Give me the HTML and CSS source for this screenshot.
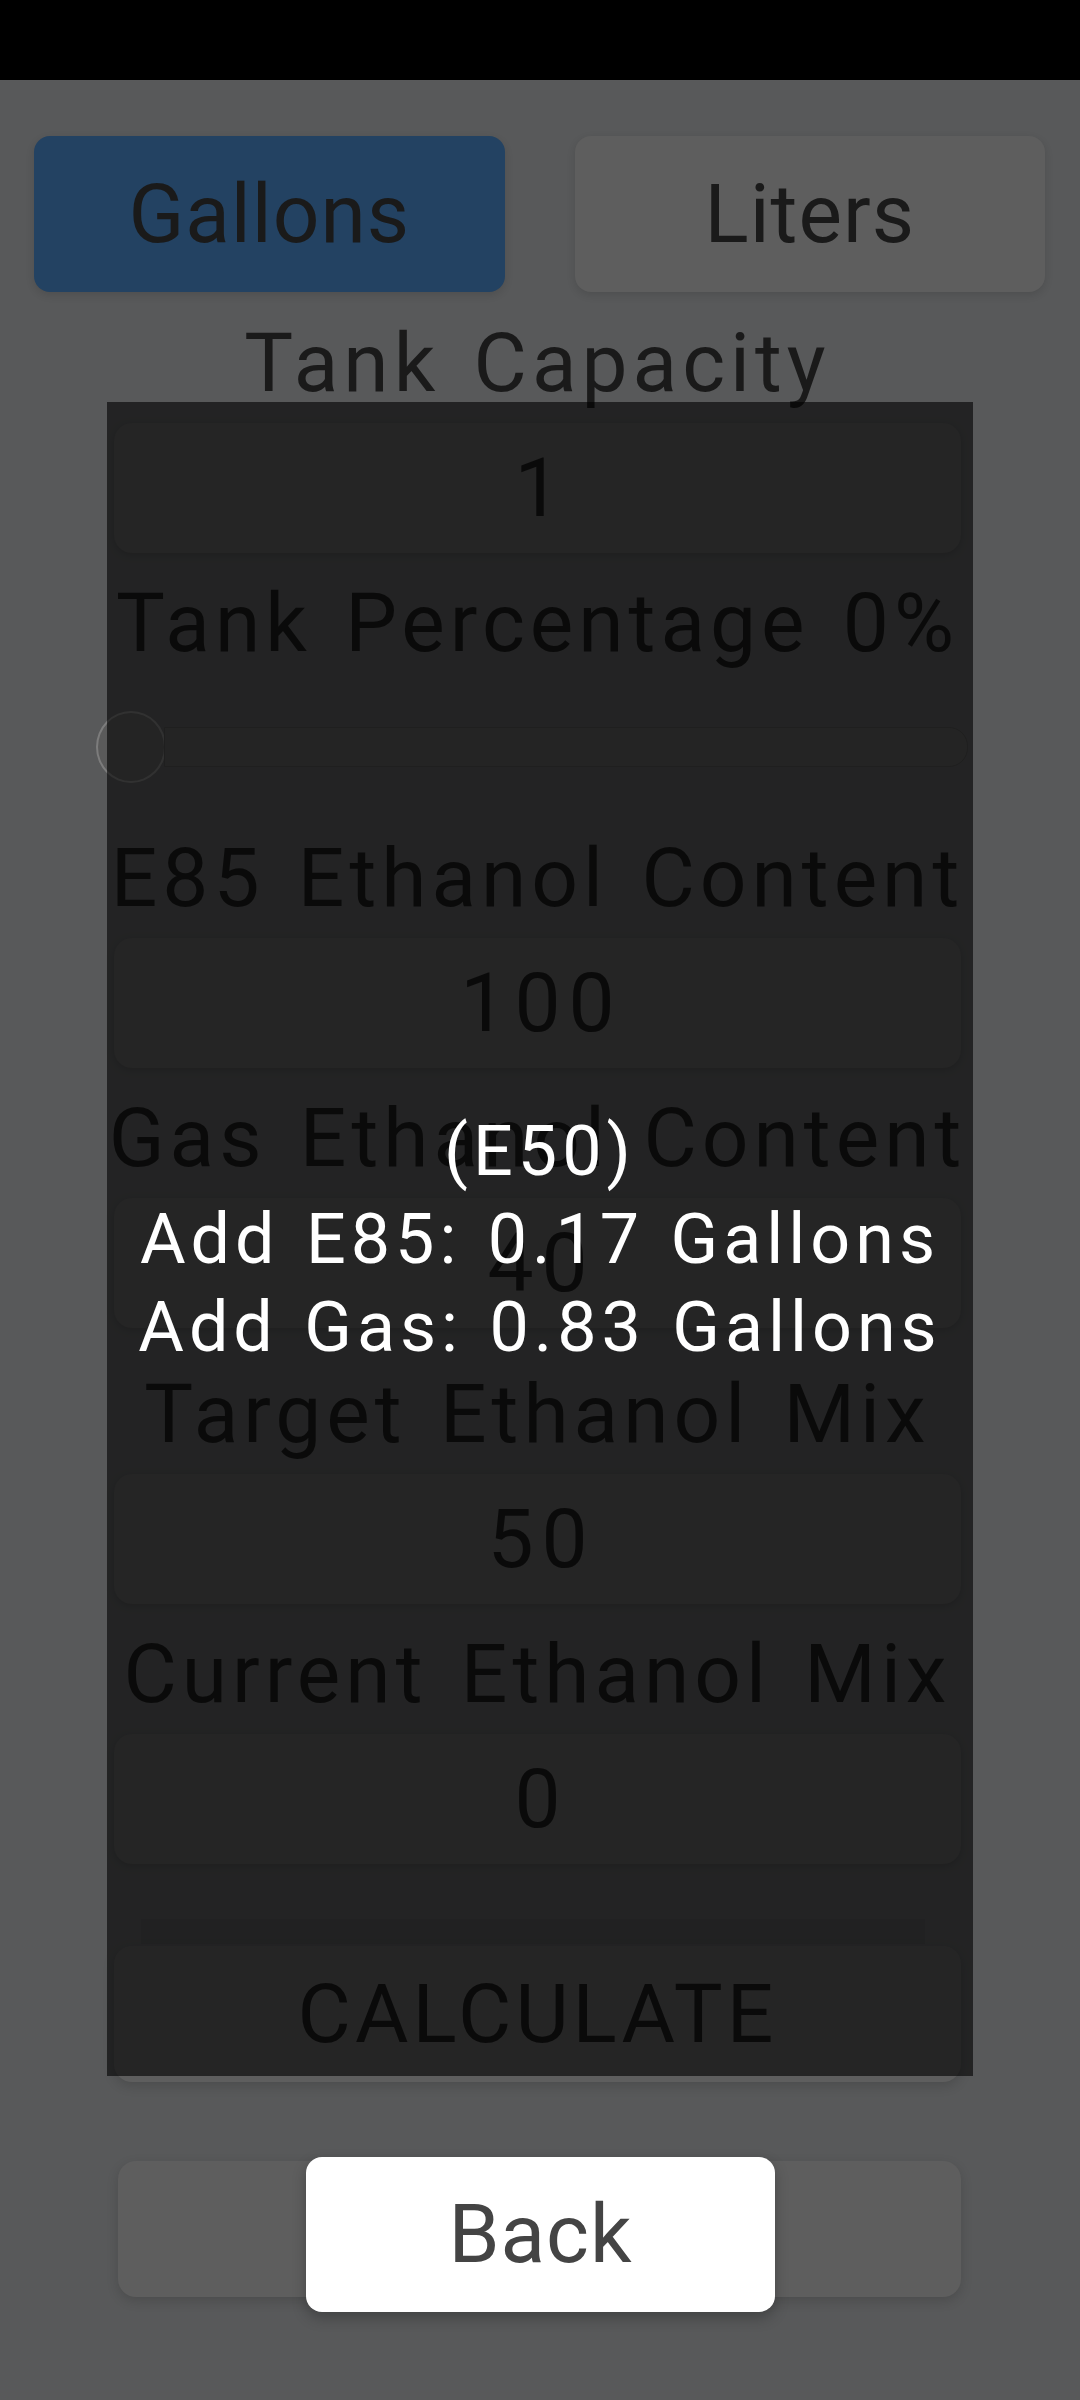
FILE: index.html
```html
<!DOCTYPE html>
<html lang="en">
<head>
  <meta charset="UTF-8" />
  <meta name="viewport" content="width=device-width, initial-scale=1.0"/>
  <title>E85 Mix Calculator</title>
  <link rel="stylesheet" href="styles.css">
</head>
<body>

  <div class="status-bar"></div>

  <div class="app">
    <div class="units">
      <div class="unit active">Gallons</div>
      <div class="unit">Liters</div>
    </div>

    <div class="form">
      <div class="label">Tank Capacity</div>
      <div class="field">1</div>

      <div class="label">Tank Percentage 0%</div>
      <div class="slider">
        <div class="thumb"></div>
        <div class="track"></div>
      </div>

      <div class="label after-slider">E85 Ethanol Content</div>
      <div class="field">100</div>

      <div class="label">Gas Ethanol Content</div>
      <div class="field">40</div>

      <div class="label wide-gap">Target Ethanol Mix</div>
      <div class="field">50</div>

      <div class="label">Current Ethanol Mix</div>
      <div class="field">0</div>

      <div class="result"></div>
      <div class="btn calc">CALCULATE</div>
      <div class="btn back">Back</div>
    </div>
  </div>

  <!-- dialogo con el resultado -->
  <div class="dialog">
    <div class="dialog-text">(E50)</div>
    <div class="dialog-text">Add E85: 0.17 Gallons</div>
    <div class="dialog-text">Add Gas: 0.83 Gallons</div>
  </div>
  <div class="dialog-btn">Back</div>

</body>
</html>
```

FILE: styles.css
```css
html, body {
  margin: 0;
  background: #58595a;
}

body {
  font-family: Roboto, "Liberation Sans", sans-serif;
  color: #1a1a1a;
  min-height: 2400px;
  position: relative;
  overflow: hidden;
}

.status-bar {
  height: 80px;
  background: #000;
}

.app {
  padding: 56px 35px 0 34px;
}

.units {
  display: flex;
  gap: 70px;
}

.unit {
  flex: 1;
  height: 156px;
  line-height: 156px;
  text-align: center;
  font-size: 82px;
  letter-spacing: 1px;
  border-radius: 16px;
  background: #5e5e5e;
  box-shadow: 0 3px 8px rgba(0, 0, 0, 0.12);
}

.unit.active {
  background: #234262;
}

.form {
  padding: 0 84px 0 80px;
}

.label {
  margin-top: 22px;
  height: 96px;
  line-height: 96px;
  font-size: 82px;
  text-align: center;
  white-space: nowrap;
  letter-spacing: 5px;
  word-spacing: 8px;
  margin-left: -40px;
  margin-right: -40px;
}

.label:first-child {
  margin-top: 23px;
}

.label.after-slider {
  margin-top: 47px;
}

.label.wide-gap {
  margin-top: 38px;
}

.field {
  margin-top: 12px;
  height: 130px;
  line-height: 130px;
  font-size: 82px;
  letter-spacing: 8px;
  text-indent: 8px;
  text-align: center;
  border-radius: 18px;
  background: #5c5c5c;
  box-shadow: 0 2px 8px rgba(0, 0, 0, 0.14);
}

.slider {
  margin: 40px -7px 0 -18px;
  height: 72px;
  display: flex;
  align-items: center;
}

.thumb {
  width: 66px;
  height: 68px;
  border-radius: 50%;
  background: #5a5a5a;
  border: 2px solid #7c7c7c;
  flex-shrink: 0;
}

.track {
  flex: 1;
  height: 38px;
  border-radius: 0 19px 19px 0;
  background: #5b5b5b;
  border: 1px solid #4e4e4e;
  margin-left: -2px;
}

.result {
  margin: 55px 36px 0 27px;
  height: 25px;
  background: #535455;
}

.btn {
  height: 136px;
  line-height: 136px;
  font-size: 82px;
  text-align: center;
  border-radius: 18px;
  background: #5e5e5e;
  box-shadow: 0 4px 12px rgba(0, 0, 0, 0.15);
  letter-spacing: 4px;
}

.btn.calc {
  margin-top: 2px;
}

.btn.back {
  margin: 79px 0 0 4px;
  color: #5e5e5e;
}

.dialog {
  position: absolute;
  top: 402px;
  left: 107px;
  width: 866px;
  height: 1674px;
  background: rgba(0, 0, 0, 0.6);
  display: flex;
  flex-direction: column;
  justify-content: center;
  align-items: center;
}

.dialog-text {
  color: #fff;
  font-size: 70px;
  line-height: 88px;
  letter-spacing: 5px;
  word-spacing: 4px;
  white-space: nowrap;
}

.dialog-btn {
  position: absolute;
  top: 2157px;
  left: 306px;
  width: 469px;
  height: 155px;
  line-height: 155px;
  border-radius: 16px;
  background: #fff;
  color: #444;
  font-size: 82px;
  text-align: center;
  letter-spacing: 1px;
  box-shadow: 0 6px 14px rgba(0, 0, 0, 0.25);
}
```
